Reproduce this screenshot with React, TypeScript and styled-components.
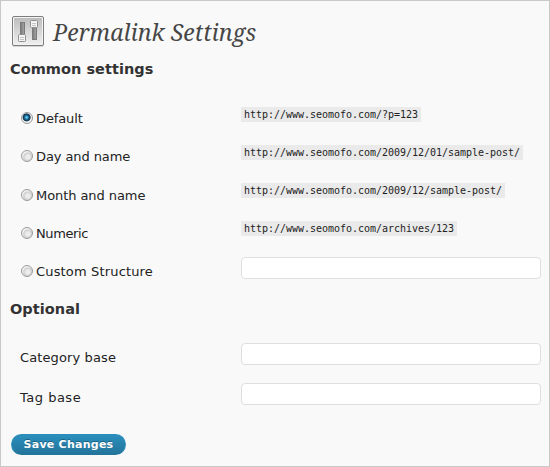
import React, { useState } from "react";
import styled, { createGlobalStyle } from "styled-components";

const GlobalStyle = createGlobalStyle`
  *, *::before, *::after { box-sizing: border-box; }
  body { margin: 0; background: #f9f9f9; }
`;

const Page = styled.main`
  width: 550px;
  height: 467px;
  padding: 14px 8px 0 10px;
  border: 1px solid #c9c9c9;
  background: #f9f9f9;
  color: #222;
  font: 13px/18px "DejaVu Sans", Verdana, sans-serif;
  overflow: hidden;
`;

const Header = styled.header`
  display: flex;
  align-items: flex-start;
  height: 44px;
`;

const Title = styled.h1`
  margin: 0 0 0 8px;
  font: italic 23px/34px "Noto Serif", Georgia, "DejaVu Serif", "Liberation Serif", serif;
  letter-spacing: 0.06px;
  color: #464646;
  white-space: nowrap;
`;

const SectionTitle = styled.h2`
  margin: 0 0 0 -1px;
  height: 20px;
  font-size: 14.5px;
  line-height: 20px;
  font-weight: bold;
  letter-spacing: 0.04px;
  color: #333;
`;

const Options = styled.div`
  padding-top: 20px;
  height: 220px;
`;

const Fields = styled.div`
  padding-top: 24px;
  height: 115px;
`;

const Row = styled.div<{ $height: number }>`
  display: grid;
  grid-template-columns: 230px 300px;
  align-items: start;
  height: ${(p) => p.$height}px;
`;

const Choice = styled.label<{ $spacing: number; $top: number }>`
  display: flex;
  align-items: flex-start;
  gap: 3px;
  padding: ${(p) => p.$top}px 0 0 10px;
  letter-spacing: ${(p) => p.$spacing}px;
  white-space: nowrap;
`;

const Radio = styled.input`
  appearance: none;
  flex: none;
  width: 12px;
  height: 12px;
  margin: 2px 0 0;
  border: 1px solid #9a9a9a;
  border-radius: 50%;
  background: radial-gradient(circle at 58% 60%, #ededed 0 20%, #d0d0d0 50%, #f4f4f4 62%);
  &:checked {
    background: radial-gradient(circle 5px at 46% 44%, #8fdcf6 0, #2a92c4 28%, #12415f 58%, #183a52 72%, #f0f0f0 88%);
  }
`;

const FieldLabel = styled.label<{ $spacing: number }>`
  padding: 6px 0 0 9px;
  letter-spacing: ${(p) => p.$spacing}px;
`;

const Code = styled.code`
  justify-self: start;
  height: 15px;
  margin-top: 8px;
  padding: 0 3px;
  background: #eaeaea;
  color: #222;
  font: 10px/15px "DejaVu Sans Mono", Consolas, monospace;
  letter-spacing: -0.02px;
  white-space: nowrap;
`;

const TextInput = styled.input<{ $top?: number }>`
  width: 300px;
  height: 22px;
  margin: ${(p) => p.$top ?? 0}px 0 0;
  padding: 2px 4px;
  border: 1px solid #dfdfdf;
  border-radius: 4px;
  background: #fff;
  font: inherit;
  outline: none;
`;

const SaveButton = styled.button`
  display: block;
  width: 115px;
  height: 21px;
  margin: 0;
  padding: 0;
  border: 1px solid #298cba;
  border-bottom-color: #21759b;
  border-radius: 11px;
  background: linear-gradient(#2b8fbd, #23749b);
  color: #fff;
  font: bold 11px/19px "DejaVu Sans", Verdana, sans-serif;
  letter-spacing: 0.25px;
  text-shadow: 0 -1px 0 rgba(0, 0, 0, 0.3);
  white-space: nowrap;
`;

const IconSvg = styled.svg`
  flex: none;
  display: block;
`;

function SettingsIcon() {
  return (
    <IconSvg width="34" height="34" viewBox="0 0 34 34" aria-hidden="true">
      <defs>
        <linearGradient id="plate" x1="0" y1="0" x2="0" y2="1">
          <stop offset="0" stopColor="#bdbdbd" />
          <stop offset="1" stopColor="#eeeeee" />
        </linearGradient>
        <linearGradient id="slot">
          <stop offset="0" stopColor="#777" />
          <stop offset="1" stopColor="#a8a8a8" />
        </linearGradient>
      </defs>
      <rect x="1" y="2" width="32" height="30" rx="2" fill="#d5d5d5" />
      <rect x="1.5" y="1.5" width="31" height="29" rx="1.5" fill="#f4f4f4" stroke="#7d7d7d" />
      <rect x="3" y="3" width="28" height="26" fill="url(#plate)" />
      <rect x="9.500" y="7.500" width="4" height="13" fill="url(#slot)" stroke="#7a7a7a" />
      <rect x="21.500" y="10.500" width="4" height="14" fill="url(#slot)" stroke="#7a7a7a" />
      <rect x="7.500" y="19.500" width="7" height="7" rx="1" fill="#f4f4f4" stroke="#909090" />
      <path d="M9 22.500h4M9 24.500h4" stroke="#c4c4c4" />
      <rect x="19.500" y="5.500" width="7" height="7" rx="1" fill="#f4f4f4" stroke="#909090" />
      <path d="M21 8.500h4M21 10.500h4" stroke="#c4c4c4" />
    </IconSvg>
  );
}

const choices = [
  { label: "Default", url: "http://www.seomofo.com/?p=123", spacing: -0.12, top: 11 },
  { label: "Day and name", url: "http://www.seomofo.com/2009/12/01/sample-post/", spacing: -0.09, top: 11 },
  { label: "Month and name", url: "http://www.seomofo.com/2009/12/sample-post/", spacing: -0.07, top: 12 },
  { label: "Numeric", url: "http://www.seomofo.com/archives/123", spacing: -0.4, top: 12 },
  { label: "Custom Structure", spacing: 0.16, top: 12 },
];

export default function App() {
  const [selected, setSelected] = useState("Default");
  return (
    <>
      <GlobalStyle />
      <Page>
        <Header>
          <SettingsIcon />
          <Title>Permalink Settings</Title>
        </Header>
        <SectionTitle>Common settings</SectionTitle>
        <Options>
          {choices.map(({ label, url, spacing, top }) => (
            <Row key={label} $height={38}>
              <Choice $spacing={spacing} $top={top}>
                <Radio
                  type="radio"
                  name="structure"
                  checked={selected === label}
                  onChange={() => setSelected(label)}
                />
                {label}
              </Choice>
              {url ? <Code>{url}</Code> : <TextInput $top={6} aria-label={label} />}
            </Row>
          ))}
        </Options>
        <SectionTitle>Optional</SectionTitle>
        <Fields>
          <Row $height={40}>
            <FieldLabel $spacing={0.12} htmlFor="category">Category base</FieldLabel>
            <TextInput id="category" />
          </Row>
          <Row $height={40}>
            <FieldLabel $spacing={0.5} htmlFor="tag">Tag base</FieldLabel>
            <TextInput id="tag" />
          </Row>
        </Fields>
        <SaveButton type="button">Save Changes</SaveButton>
      </Page>
    </>
  );
}
